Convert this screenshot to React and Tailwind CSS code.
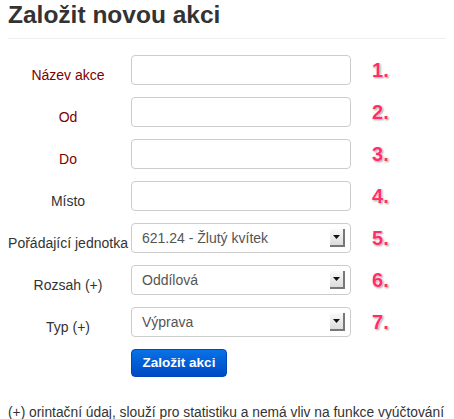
import React from 'react';

const rows = [
    { label: 'Název akce', required: true },
    { label: 'Od', required: true },
    { label: 'Do', required: true },
    { label: 'Místo' },
    { label: 'Pořádající jednotka', select: '621.24 - Žlutý kvítek' },
    { label: 'Rozsah (+)', select: 'Oddílová' },
    { label: 'Typ (+)', select: 'Výprava' },
];

const SelectBox = ({ value }) => (
    <div className="w-[220px] h-[30px] rounded-[4px] border border-[#ccc] bg-white flex items-center justify-between pl-[10px] pr-[5px] text-[14px] text-[#555]">
        <span>{value}</span>
        <span className="w-[15px] h-[18px] bg-gradient-to-b from-[#fafafa] to-[#dcdcdc] border-r-2 border-b-2 border-[#777] flex items-center justify-center">
            <svg width="7" height="4" viewBox="0 0 7 4">
                <path d="M0 0H7L3.5 4Z" fill="#111" />
            </svg>
        </span>
    </div>
);

export default function App() {
    return (
        <div className="w-[454px] h-[419px] bg-white px-2 font-['Liberation_Sans',Arial,sans-serif] text-[#333]">
            <h1 className="text-[24.5px] leading-[30px] font-bold text-[#333] pb-[8px] border-b border-[#eee]">
                Založit novou akci
            </h1>

            <div className="mt-[16px] flex flex-col gap-[12px]">
                {rows.map((row, i) => (
                    <div key={row.label} className="flex items-start">
                        <div className={`w-[120px] mr-[3px] pt-[10px] text-center text-[14px] leading-[20px] ${row.required ? 'text-[#800000]' : 'text-[#333]'}`}>
                            {row.label}
                        </div>
                        {row.select ? (
                            <SelectBox value={row.select} />
                        ) : (
                            <input className="w-[220px] h-[30px] rounded-[4px] border border-[#ccc] bg-white outline-none" />
                        )}
                        <div className="ml-[21px] h-[30px] flex items-center text-[20px] font-bold text-[#ff2d6c] [text-shadow:0_0_1px_#fff,0_0_2px_#fff,1px_1px_2px_#888]">
                            {i + 1}.
                        </div>
                    </div>
                ))}

                <div className="flex">
                    <button className="ml-[123px] w-[96px] h-[28px] rounded-[4px] bg-gradient-to-b from-[#0a72e6] to-[#0049c4] border border-[#0046b8] text-white text-[13.5px] font-bold">
                        Založit akci
                    </button>
                </div>
            </div>

            <p className="mt-[27px] whitespace-nowrap text-[13.8px] leading-[18px] text-[#333]">
                (+) orintační údaj, slouží pro statistiku a nemá vliv na funkce vyúčtování
            </p>
        </div>
    );
}
